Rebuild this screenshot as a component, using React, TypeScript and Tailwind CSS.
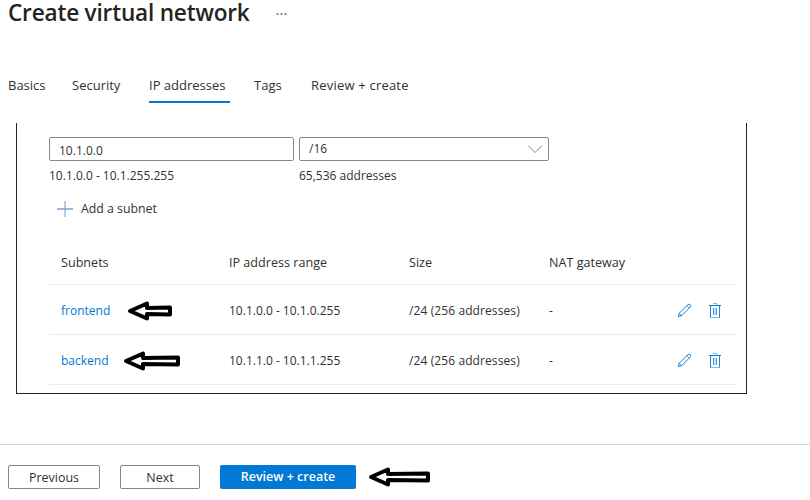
import React from "react";

const FONT = "font-['Open_Sans','Noto_Sans',sans-serif]";

const subnets = [
  { name: "frontend", range: "10.1.0.0 - 10.1.0.255", arrow: 47, gap: "gap-[16px]" },
  { name: "backend", range: "10.1.1.0 - 10.1.1.255", arrow: 59, gap: "gap-[13px]" },
];

// hand drawn arrows on the screenshot
function Arrow({ width }: { width: number }) {
  const tail = width - 3;
  return (
    <svg width={width} height={22} viewBox={`0 0 ${width} 22`} className="block shrink-0">
      <path
        d={`M4 11 L21 3.5 L21 8 L${tail} 7.5 L${tail} 14.5 L21 14 L21 18.5 Z`}
        fill="white"
        stroke="black"
        strokeWidth={4}
        strokeLinejoin="round"
      />
    </svg>
  );
}

function PencilIcon() {
  return (
    <svg width={15} height={15} viewBox="0 0 16 16" fill="none" stroke="#0078d4" strokeWidth={1}>
      <path d="M1.5 14.5 L2.3 11 L11.8 1.6 Q13 0.9 14.1 1.9 Q15 3 14.3 4.1 L4.9 13.6 Z" />
      <path d="M10.5 3 L13 5.5" stroke="#5ea8e2" />
      <path d="M2.3 11 L4.9 13.6" />
    </svg>
  );
}

function TrashIcon() {
  return (
    <svg width={12} height={15} viewBox="0 0 12 15" fill="none">
      <path d="M4 0.5 H8 V2" stroke="#83bdea" />
      <path d="M0 2.5 H12" stroke="#0078d4" />
      <path d="M1.5 2.5 V14.5 H10.5 V2.5" stroke="#1a88dc" />
      <path d="M4.5 5 V12 M7.5 5 V12" stroke="#3d9ae2" />
      <path d="M6 5 V12" stroke="#83bdea" />
      <path d="M2 14.5 H10" stroke="#83bdea" />
    </svg>
  );
}

export default function App() {
  return (
    <div className={`${FONT} w-[810px] h-[500px] overflow-hidden bg-white text-[#323130] flex flex-col`}>
      <div className="h-[24px] pl-2 pt-[2px] flex items-center">
        <span className="text-[22.6px] font-semibold leading-[24px] text-[#252423] tracking-[-0.2px]">Create virtual network</span>
        <span className="ml-[26px] text-[15px] leading-none text-[#605e5c]">···</span>
      </div>

      <div className="mt-[49px] pl-2 flex h-[30px] text-[13px] leading-[17px]">
        <div className="w-[64px] pt-[4px]">Basics</div>
        <div className="w-[77px] pt-[4px]">Security</div>
        <div className="w-[81px] h-[30px] pt-[4px] font-medium border-b-2 border-[#0078d4]">IP addresses</div>
        <div className="ml-[24px] w-[57px] pt-[4px]">Tags</div>
        <div className="pt-[4px] tracking-[0.2px]">Review + create</div>
      </div>

      <div className="mt-[20px] ml-4 w-[731px] h-[271px] border-x border-b border-[#252423] pl-[32px] pr-[9px] pt-[14px]">
        <div className="flex gap-[5px]">
          <div className="w-[245px] h-[24px] border border-[#8a8886] rounded-[2px] pl-[9px] text-[12px] leading-[25px]">10.1.0.0</div>
          <div className="w-[250px] h-[24px] border border-[#8a8886] rounded-[2px] pl-[9px] pr-[5px] text-[12px] flex items-center justify-between">
            <span>/16</span>
            <svg width={16} height={8} viewBox="0 0 16 8" fill="none" stroke="#8a8886" strokeWidth={1}>
              <path d="M1 0.5 L8 7.5 L15 0.5" />
            </svg>
          </div>
        </div>
        <div className="flex gap-[5px] mt-[7px] text-[12px] leading-[16px]">
          <div className="w-[245px]">10.1.0.0 - 10.1.255.255</div>
          <div>65,536 addresses</div>
        </div>
        <div className="flex items-center mt-[16px] pl-[8px] h-[18px] text-[12.3px]">
          <svg width={16} height={16} viewBox="0 0 16 16" fill="none" strokeWidth={1.2}>
            <path d="M0 8 H16" stroke="#6d7fc9" />
            <path d="M8 0 V16" stroke="#7fa8dc" />
          </svg>
          <span className="ml-[8px]">Add a subnet</span>
        </div>

        <div className="mt-[21px] flex items-center h-[46px] pt-[3px] pl-[12px] text-[12.6px] font-medium border-b border-[#edebe9]">
          <div className="w-[168px]">Subnets</div>
          <div className="w-[180px]">IP address range</div>
          <div className="w-[140px]">Size</div>
          <div>NAT gateway</div>
        </div>
        {subnets.map((s) => (
          <div key={s.name} className="flex items-center h-[50px] pt-[2px] pl-[12px] text-[12px] border-b border-[#edebe9]">
            <div className={`w-[168px] flex items-center ${s.gap} text-[#0078d4]`}>
              <span>{s.name}</span>
              <Arrow width={s.arrow} />
            </div>
            <div className="w-[180px]">{s.range}</div>
            <div className="w-[140px] tracking-[0.1px]">/24 (256 addresses)</div>
            <div className="w-[128px]">-</div>
            <div className="flex items-center gap-[17px]">
              <PencilIcon />
              <TrashIcon />
            </div>
          </div>
        ))}
      </div>

      <div className="mt-[50px] border-t border-[#d6d6d6] pt-[20px] pl-2 flex items-center text-[12.5px] font-medium leading-[24px]">
        <button className="w-[92px] h-[24px] border border-[#8a8886] rounded-[2px]">Previous</button>
        <button className="ml-[20px] w-[80px] h-[24px] border border-[#8a8886] rounded-[2px]">Next</button>
        <button className="ml-[20px] w-[136px] h-[24px] bg-[#0078d4] text-white rounded-[2px] font-semibold">Review + create</button>
        <div className="ml-[11px]">
          <Arrow width={64} />
        </div>
      </div>
    </div>
  );
}
